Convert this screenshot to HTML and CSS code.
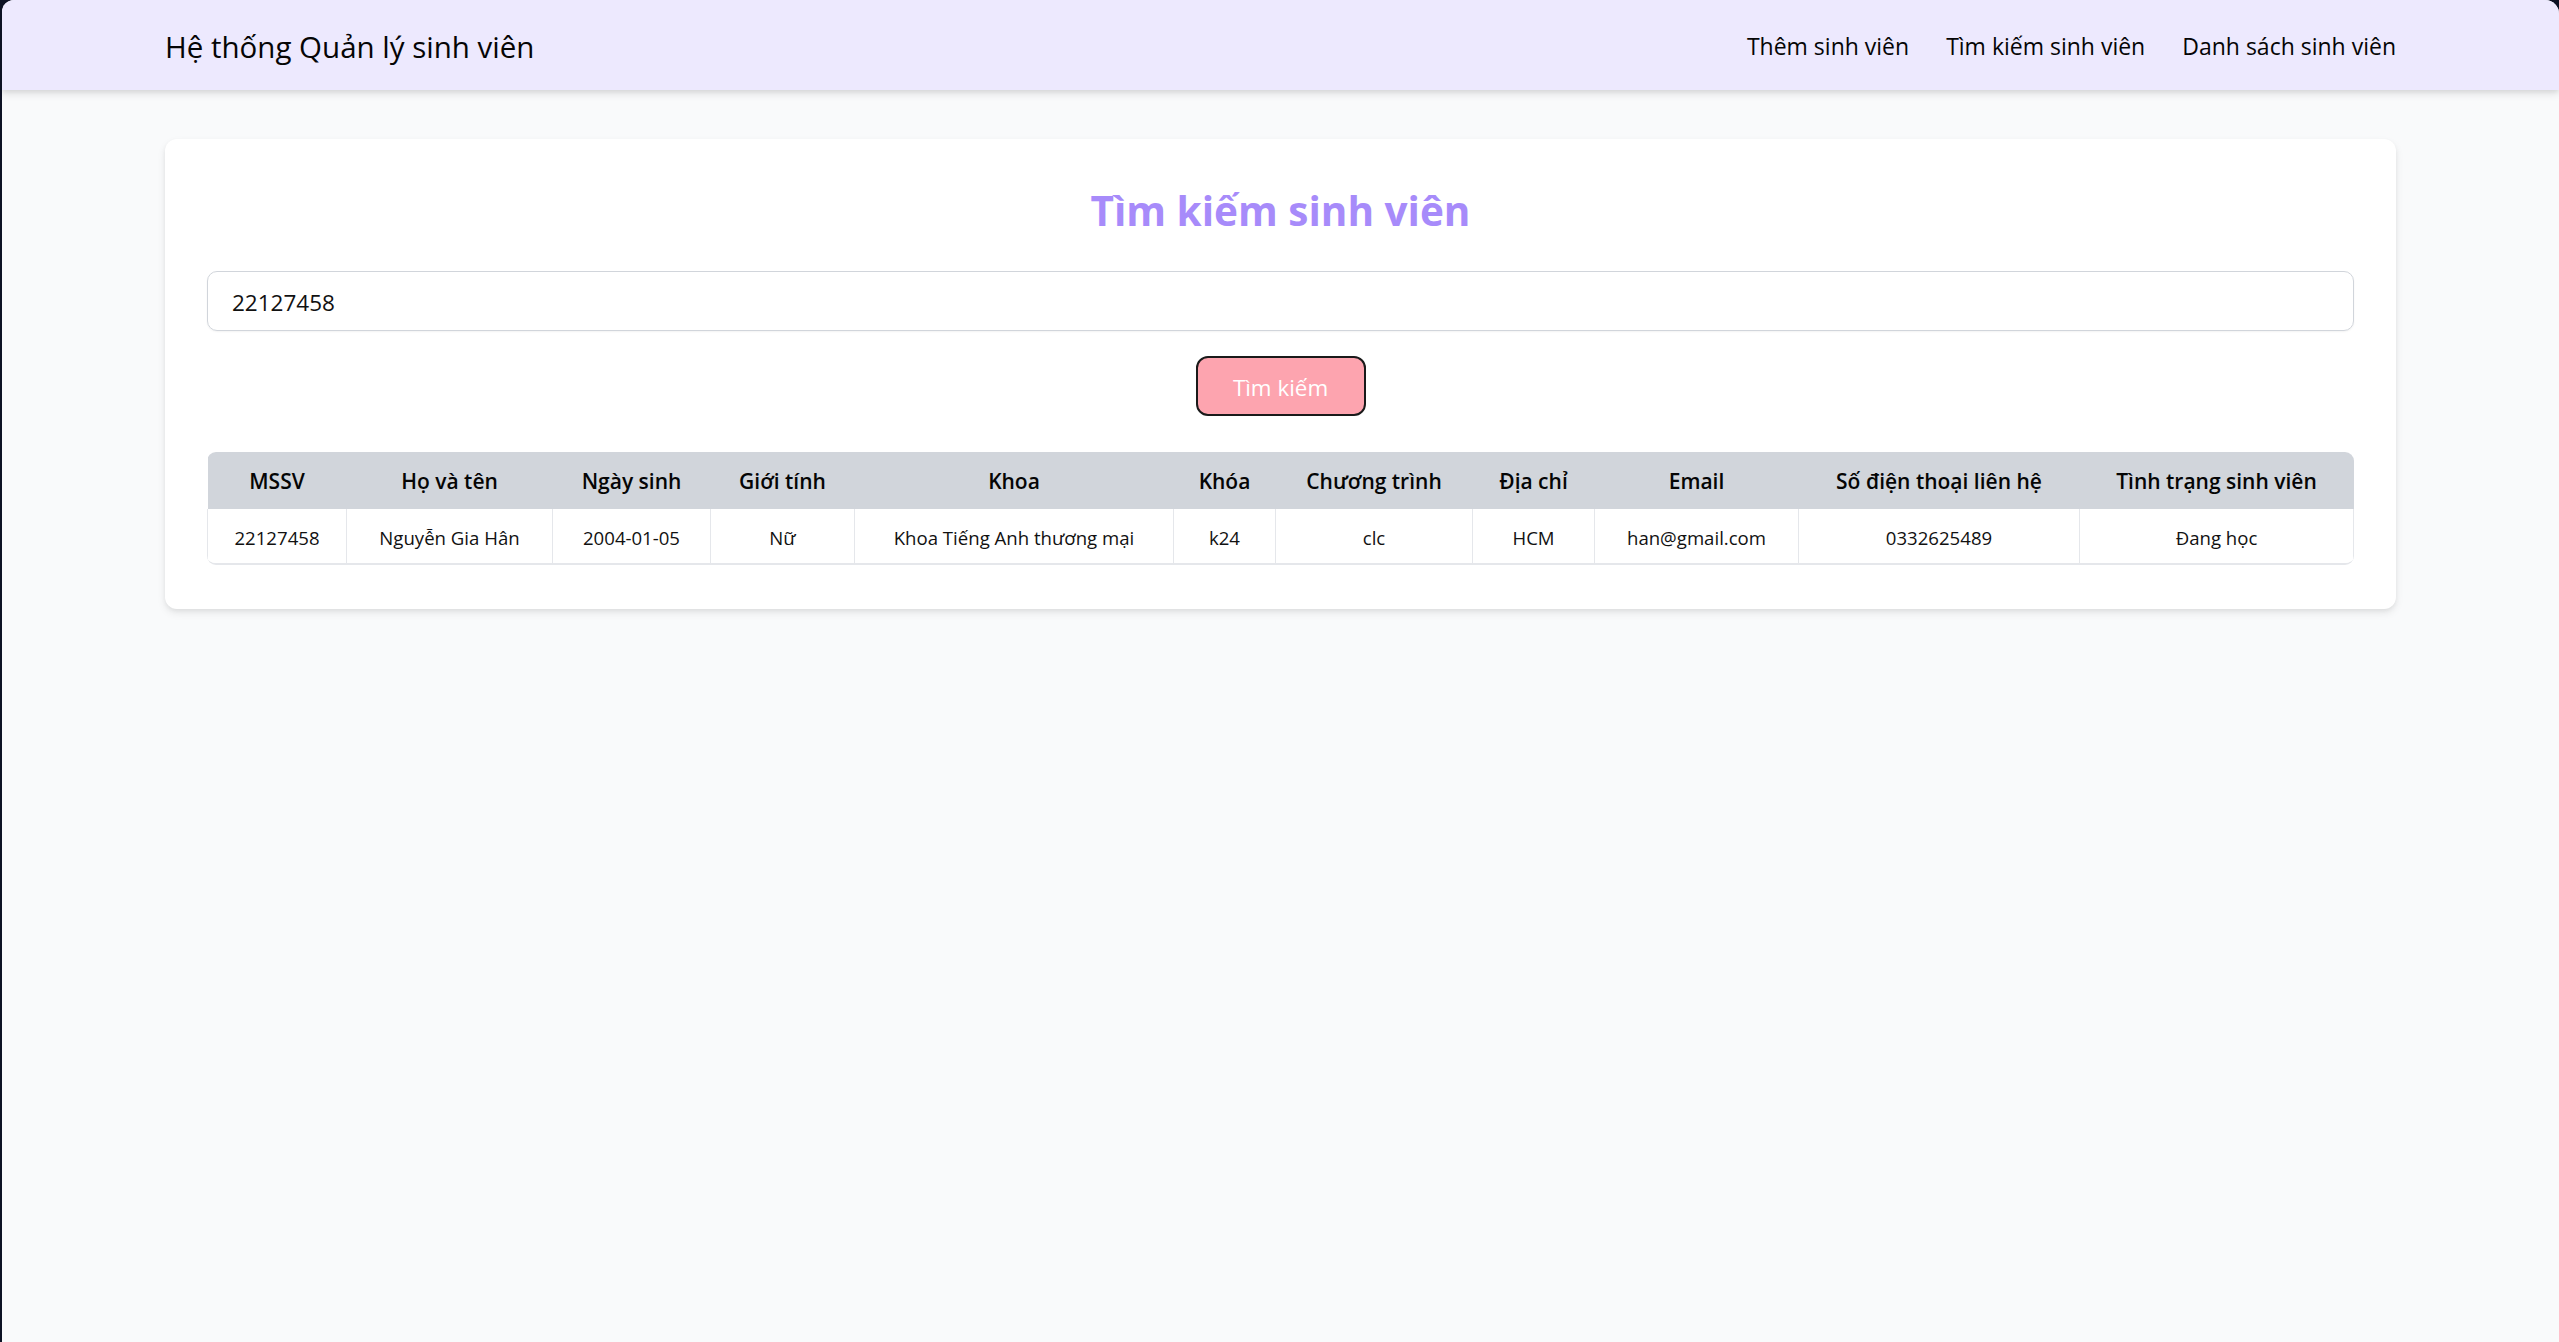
FILE: index.html
```html
<!DOCTYPE html>
<html lang="vi">
<head>
<meta charset="utf-8">
<title>Tìm kiếm sinh viên</title>
<link rel="stylesheet" href="styles.css">
</head>
<body>
<div class="window">
  <header class="navbar">
    <div class="container nav-inner">
      <div class="brand">Hệ thống Quản lý sinh viên</div>
      <nav class="nav-links">
        <a href="#">Thêm sinh viên</a>
        <a href="#">Tìm kiếm sinh viên</a>
        <a href="#">Danh sách sinh viên</a>
      </nav>
    </div>
  </header>
  <main class="container card">
    <h1 class="card-title">Tìm kiếm sinh viên</h1>
    <div class="search-input">22127458</div>
    <div class="btn-row"><button class="btn">Tìm kiếm</button></div>
    <div class="table-wrap">
      <table class="result">
        <colgroup>
          <col class="c1"><col class="c2"><col class="c3"><col class="c4"><col class="c5"><col class="c6"><col class="c7"><col class="c8"><col class="c9"><col class="c10"><col class="c11">
        </colgroup>
        <thead>
          <tr>
            <th>MSSV</th><th>Họ và tên</th><th>Ngày sinh</th><th>Giới tính</th><th>Khoa</th><th>Khóa</th><th>Chương trình</th><th>Địa chỉ</th><th>Email</th><th>Số điện thoại liên hệ</th><th>Tình trạng sinh viên</th>
          </tr>
        </thead>
        <tbody>
          <tr>
            <td>22127458</td><td>Nguyễn Gia Hân</td><td>2004-01-05</td><td>Nữ</td><td>Khoa Tiếng Anh thương mại</td><td>k24</td><td>clc</td><td>HCM</td><td>han@gmail.com</td><td>0332625489</td><td>Đang học</td>
          </tr>
        </tbody>
      </table>
    </div>
  </main>
</div>
</body>
</html>
```
FILE: styles.css
```css
html {
  background: #0d1224;
  height: 100%;
}
body {
  margin: 0;
  height: 100%;
  font-family: "Open Sans", "Noto Sans", sans-serif;
  color: #111;
}
.window {
  margin-left: 2px;
  height: 100%;
  background: #f9fafb;
  border-radius: 12px 14px 0 0;
  overflow: hidden;
}
.container {
  width: 2231px;
  margin: 0 auto;
  box-sizing: border-box;
}
.navbar {
  height: 90px;
  background: #ede9fe;
  box-shadow: 0 4px 8px rgba(0,0,0,0.10), 0 2px 4px rgba(0,0,0,0.06);
  position: relative;
}
.nav-inner {
  height: 100%;
  display: flex;
  align-items: center;
  justify-content: space-between;
}
.brand {
  font-size: 29.5px;
  font-weight: 500;
  color: #050505;
  padding-top: 2px;
}
.nav-links {
  display: flex;
  gap: 37px;
  padding-top: 2px;
}
.nav-links a {
  font-size: 23px;
  font-weight: 500;
  color: #050505;
  text-decoration: none;
}
.card {
  margin-top: 49px;
  background: #fff;
  border-radius: 12px;
  padding: 48px 42px 44px;
  box-shadow: 0 4px 8px rgba(0,0,0,0.08), 0 2px 4px rgba(0,0,0,0.05);
}
.card-title {
  margin: 0;
  text-align: center;
  font-size: 40.5px;
  line-height: 44px;
  padding-top: 2px;
  margin-bottom: -2px;
  font-weight: 700;
  color: #a78bfa;
}
.search-input {
  margin-top: 40px;
  height: 60px;
  box-sizing: border-box;
  border: 1px solid #d1d5db;
  border-radius: 10px;
  padding: 2px 24px 0;
  display: flex;
  align-items: center;
  font-size: 22.5px;
  color: #111;
  box-shadow: 0 1px 2px rgba(0,0,0,0.05);
}
.btn-row {
  margin-top: 25px;
  display: flex;
  justify-content: center;
}
.btn {
  width: 170px;
  height: 60px;
  padding-top: 3px;
  background: #fda4af;
  border: 2.5px solid #1a1a1a;
  border-radius: 12px;
  color: #fff;
  font-family: inherit;
  font-size: 22.4px;
  cursor: pointer;
}
.table-wrap {
  margin-top: 36px;
  border-radius: 9px;
  overflow: hidden;
  border-bottom: 2px solid #e5e7eb;
}
.result {
  width: 100%;
  border-collapse: collapse;
  table-layout: fixed;
}
.result th {
  height: 57px;
  background: #d1d5db;
  font-size: 21px;
  font-weight: 600;
  color: #050505;
  text-align: center;
  padding: 0;
}
.result td {
  height: 52px;
  background: #fff;
  font-size: 18.6px;
  color: #111;
  text-align: center;
  padding: 2px 0 0;
  border-left: 1px solid #e5e7eb;
  border-right: 1px solid #e5e7eb;
}
.c1 { width: 139px; }
.c2 { width: 206px; }
.c3 { width: 158px; }
.c4 { width: 144px; }
.c5 { width: 319px; }
.c6 { width: 102px; }
.c7 { width: 197px; }
.c8 { width: 122px; }
.c9 { width: 204px; }
.c10 { width: 281px; }
.c11 { width: 274px; }
```
